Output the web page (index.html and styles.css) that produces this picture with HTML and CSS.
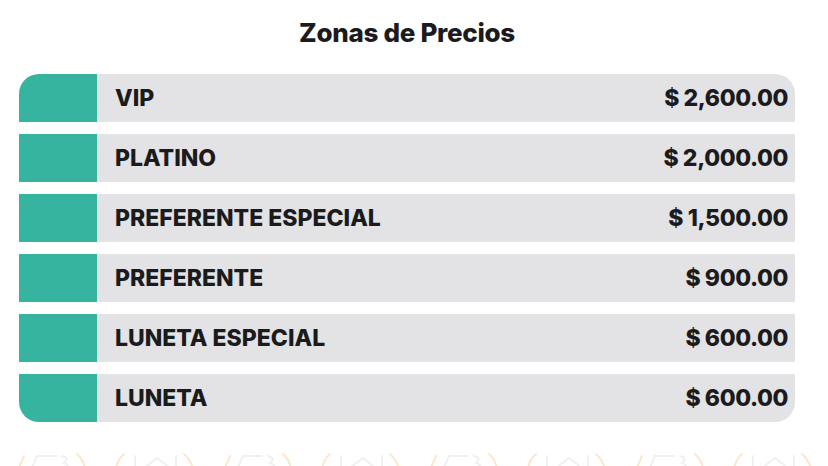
FILE: index.html
```html
<!DOCTYPE html>
<html lang="es">
<head>
<meta charset="utf-8">
<link rel="stylesheet" href="styles.css">
</head>
<body>
<main class="page">
  <h1 class="title">Zonas de Precios</h1>
  <div class="zones">
    <div class="zone"><span class="swatch"></span><div class="info"><span class="name">VIP</span><span class="price">$ 2,600.00</span></div></div>
    <div class="zone"><span class="swatch"></span><div class="info"><span class="name">PLATINO</span><span class="price">$ 2,000.00</span></div></div>
    <div class="zone"><span class="swatch"></span><div class="info"><span class="name">PREFERENTE ESPECIAL</span><span class="price">$ 1,500.00</span></div></div>
    <div class="zone"><span class="swatch"></span><div class="info"><span class="name">PREFERENTE</span><span class="price">$ 900.00</span></div></div>
    <div class="zone"><span class="swatch"></span><div class="info"><span class="name">LUNETA ESPECIAL</span><span class="price">$ 600.00</span></div></div>
    <div class="zone"><span class="swatch"></span><div class="info"><span class="name">LUNETA</span><span class="price">$ 600.00</span></div></div>
  </div>
  <div class="deco">
    <svg width="828" height="24" viewBox="0 0 828 24" xmlns="http://www.w3.org/2000/svg">
      <defs>
        <pattern id="p" x="-2" y="0" width="206" height="40" patternUnits="userSpaceOnUse">
          <g fill="none" stroke-width="2" stroke-linecap="round">
            <path d="M26 10 L20 24" stroke="#fbe8cc"/>
            <path d="M33 24 L39 10 L58 10" stroke="#f0f0f0"/>
            <path d="M64 10 Q72 12 66 17 Q74 20 68 26" stroke="#f0f0f0"/>
            <path d="M79 8 Q86 14 87 24" stroke="#fbe8cc"/>
            <path d="M126 8 Q119 14 118 24" stroke="#fbe8cc"/>
            <path d="M137 10 L137 26" stroke="#f0f0f0"/>
            <path d="M146 22 L159 12 L172 22" stroke="#f0f0f0"/>
            <path d="M178 10 L178 26" stroke="#f0f0f0"/>
            <path d="M186 8 Q193 14 195 24" stroke="#fbe8cc"/>
          </g>
        </pattern>
      </defs>
      <rect x="0" y="0" width="828" height="24" fill="url(#p)"/>
    </svg>
  </div>
</main>
</body>
</html>
```

FILE: styles.css
```css
html, body {
  margin: 0;
  padding: 0;
  background: #ffffff;
}

.page {
  width: 828px;
  height: 466px;
  overflow: hidden;
  font-family: "Inter", "Lato", "Liberation Sans", sans-serif;
  color: #1b1b1d;
  display: flex;
  flex-direction: column;
}

.title {
  flex: none;
  margin: 0 33px 0 19px;
  height: 74px;
  box-sizing: border-box;
  padding-top: 16px;
  text-align: center;
  font-size: 26px;
  line-height: 34px;
  font-weight: 800;
  letter-spacing: -0.3px;
}

.zones {
  flex: none;
  margin: 0 33px 0 19px;
  display: flex;
  flex-direction: column;
  gap: 12px;
  border-radius: 20px;
  overflow: hidden;
}

.zone {
  flex: none;
  display: flex;
  height: 48px;
}

.swatch {
  width: 78px;
  background: #36b49f;
  flex: none;
}

.info {
  flex: 1;
  background: #e3e3e5;
  display: flex;
  align-items: center;
  justify-content: space-between;
  padding: 0 7px 0 18px;
  font-size: 23px;
  font-weight: 800;
  letter-spacing: 0;
}

.price {
  letter-spacing: -0.4px;
}

.deco {
  flex: none;
  margin-top: 24px;
  height: 24px;
}

.deco svg {
  display: block;
}
```
